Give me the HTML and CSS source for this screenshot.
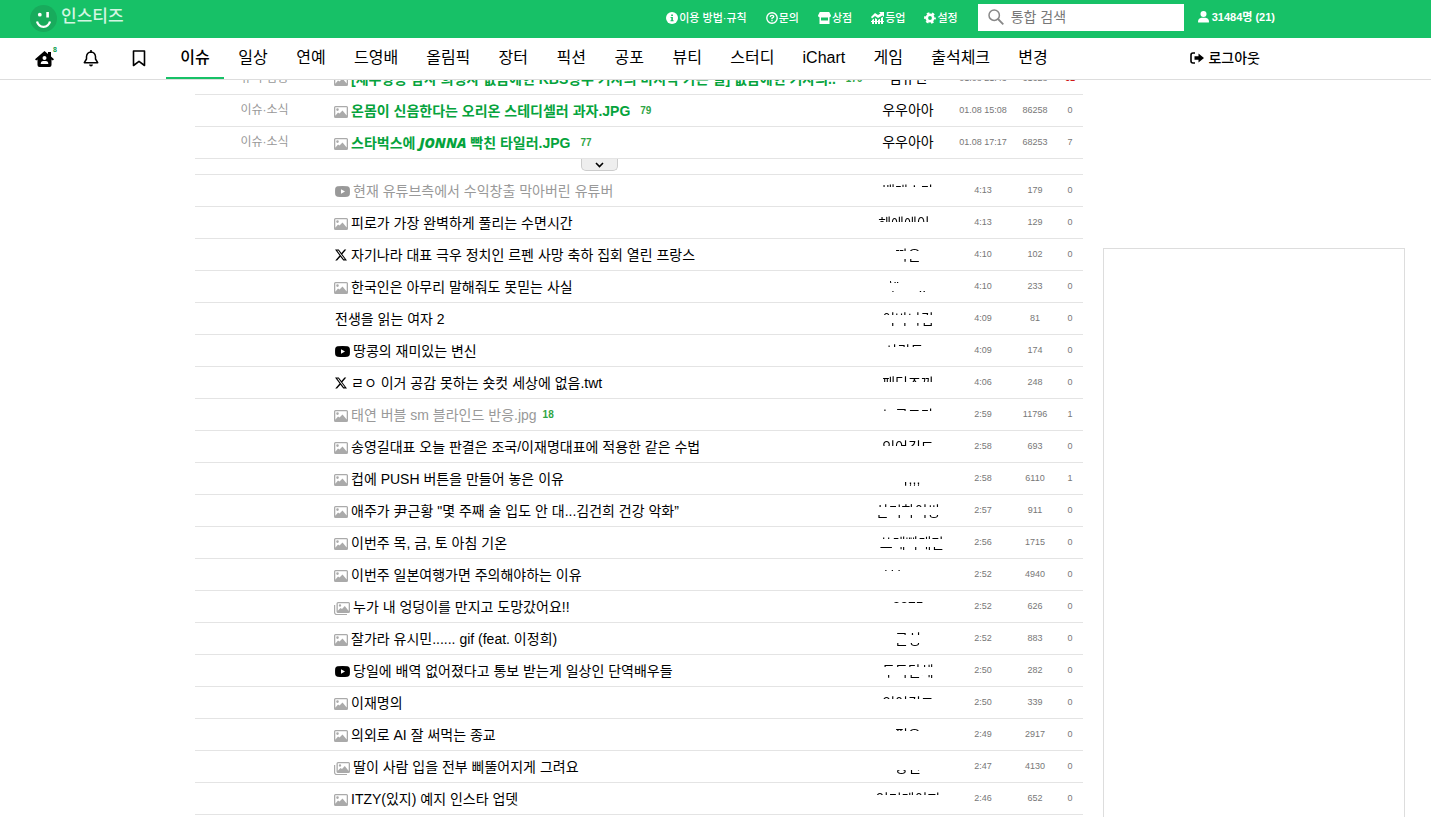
FILE: index.html
```html
<!DOCTYPE html>
<html lang="ko">
<head>
<meta charset="utf-8">
<title>인스티즈</title>
<link rel="stylesheet" href="styles.css">
</head>
<body>
<svg class="sprite" aria-hidden="true">
  <symbol id="i-image" viewBox="0 0 14 12"><path fill-rule="evenodd" d="M1.500 0h11A1.500 1.500 0 0 1 14 1.500v9a1.500 1.500 0 0 1-1.500 1.500h-11A1.500 1.500 0 0 1 0 10.500v-9A1.500 1.500 0 0 1 1.500 0zM1.300 1.300v8.500L4 6.500l1.500 1 3-3 4.200 5V1.300zM3.500 2.300a1.300 1.300 0 1 1 0 2.600 1.300 1.300 0 0 1 0-2.600z"/></symbol>
  <symbol id="i-images" viewBox="0 0 16 13"><path d="M.6 3v7.500a2 2 0 0 0 2 2H13" fill="none" stroke="currentColor" stroke-width="1.200"/><path fill-rule="evenodd" d="M4 0h10.500A1.500 1.500 0 0 1 16 1.500v8a1.500 1.500 0 0 1-1.500 1.500H4a1.500 1.500 0 0 1-1.500-1.500v-8A1.500 1.500 0 0 1 4 0zM3.800 1.300v7.500L6.500 6 8 7l2.800-3 3.900 5V1.300zM6 2.200a1.200 1.200 0 1 1 0 2.400 1.200 1.200 0 0 1 0-2.400z"/></symbol>
  <symbol id="i-video" viewBox="0 0 15 11"><path fill-rule="evenodd" d="M2.500.2Q7.500-.2 12.500.2 14.500.4 14.800 2.500q.3 3 0 6-.3 2.100-2.300 2.300-5 .4-10 0Q.5 10.600.2 8.500q-.3-3 0-6Q.5.400 2.500.2zM6 3.200v4.600l4-2.300z"/></symbol>
  <symbol id="i-x" viewBox="0 0 24 24"><path d="M18.900 1.150h3.680l-8.040 9.190L24 22.850h-7.400l-5.800-7.590-6.640 7.590H.47l8.600-9.830L0 1.150h7.600l5.240 6.940ZM17.610 20.640h2.040L6.490 3.240H4.300Z"/></symbol>
</svg>

<header class="site-header">
  <div class="topbar">
    <a class="logo" href="#">
      <svg width="27" height="27" viewBox="0 0 27 27" aria-hidden="true"><circle cx="13.500" cy="13.500" r="13.500" fill="#18ab5c"/><circle cx="9.800" cy="9.700" r="1.900" fill="#fff"/><path d="M16.300 7h2.600v5.500h-2.600z" fill="#fff"/><path d="M7 16.500q1.500 5.300 6.500 5.300t6.500-5.300" fill="none" stroke="#fff" stroke-width="2.300"/></svg>
      <span>인스티즈</span>
    </a>
    <nav class="links">
      <a href="#"><svg width="12" height="12" viewBox="0 0 12 12"><circle cx="6" cy="6" r="6" fill="#fff"/><path d="M5.200 2.500h1.700v1.500H5.200zM4.600 5h2.300v3.300h.7v1H4.500v-1h.8V6h-.7z" fill="#17c167"/></svg>이용 방법·규칙</a>
      <a href="#"><svg width="12" height="12" viewBox="0 0 12 12"><circle cx="6" cy="6" r="5.200" fill="none" stroke="#fff" stroke-width="1.400"/><path d="M4.200 4.900Q4.300 3.300 6 3.300t1.800 1.300Q7.800 5.500 6 6.100V7.200M6 8v1.300" fill="none" stroke="#fff" stroke-width="1.300"/></svg>문의</a>
      <a href="#"><svg width="13" height="12" viewBox="0 0 13 12"><path fill="#fff" fill-rule="evenodd" d="M1.800 0h9.400L13 3.500Q13 5.200 11.500 5.300V12h-10V5.300Q0 5.200 0 3.500zM3 5.500v3h7v-3z"/></svg>상점</a>
      <a href="#"><svg width="13" height="12" viewBox="0 0 13 12"><path d="M0 5 4 1l3 2 2.500-1.500L8 0h5v5l-1.500-1.500L7 6 4 4 1 6.500zM1 8l2-1.200V12H1zM4 6l2 1.200V12H4zM7 8l2-1.200V12H7zM10 6l2-1.300V12h-2zM0 9h13v1H0z" fill="#fff"/></svg>등업</a>
      <a href="#"><svg width="12" height="12" viewBox="0 0 12 12"><circle cx="6" cy="6" r="3.200" fill="none" stroke="#fff" stroke-width="2.600"/><circle cx="6" cy="6" r="4.800" fill="none" stroke="#fff" stroke-width="2.200" stroke-dasharray="2.500 2.530" stroke-dashoffset="1.200"/></svg>설정</a>
    </nav>
    <label class="search">
      <svg width="16" height="16" viewBox="0 0 16 16" aria-hidden="true"><circle cx="6.200" cy="6.200" r="5.200" fill="none" stroke="#888" stroke-width="1.500"/><path d="m10 10 5.300 5.300" stroke="#888" stroke-width="1.800"/></svg>
      <input type="text" placeholder="통합 검색" aria-label="통합 검색">
    </label>
    <a class="online" href="#"><svg width="11" height="12" viewBox="0 0 11 12"><circle cx="5.500" cy="3" r="3" fill="#fff"/><path d="M0 11Q0 7 3.500 6.700h4Q11 7 11 11q0 .6-.8.6H.8Q0 11.600 0 11z" fill="#fff"/></svg>31484명 (21)</a>
  </div>
  <nav class="menu">
    <a class="tool home" href="#" aria-label="홈"><svg width="19" height="16" viewBox="0 0 19 16"><path fill-rule="evenodd" d="M9.500 0 13 3V1h3v4.500L19 8.300 17.800 9.500 16.500 8.500V14q0 2-2 2h-10q-2 0-2-2V8.500L1.200 9.500 0 8.300zM9.500 5a2 2 0 1 0 0 4 2 2 0 0 0 0-4zM5.700 13h7.600q0-3-2.500-3H8.200q-2.500 0-2.500 3z"/></svg><span class="badge">8</span></a>
    <a class="tool bell" href="#" aria-label="알림"><svg width="16" height="17" viewBox="0 0 16 17"><path d="M8 2Q4 2.300 3.500 6.500V9L1.300 12.700h13.400L12.500 9V6.500Q12 2.300 8 2z" fill="none" stroke="#000" stroke-width="1.500" stroke-linejoin="round"/><path d="M7.200 0h1.600v2H7.200zM6 14.500h4Q9.700 16.500 8 16.500T6 14.500z"/></svg></a>
    <a class="tool mark" href="#" aria-label="북마크"><svg width="14" height="17" viewBox="0 0 14 17"><path d="M1.500 1h11v14.500L7 11.300l-5.500 4.200z" fill="none" stroke="#000" stroke-width="1.600" stroke-linejoin="round"/></svg></a>
    <a class="tab active" href="#">이슈</a><a class="tab" href="#">일상</a><a class="tab" href="#">연예</a><a class="tab" href="#">드영배</a><a class="tab" href="#">올림픽</a><a class="tab" href="#">장터</a><a class="tab" href="#">픽션</a><a class="tab" href="#">공포</a><a class="tab" href="#">뷰티</a><a class="tab" href="#">스터디</a><a class="tab" href="#">iChart</a><a class="tab" href="#">게임</a><a class="tab" href="#">출석체크</a><a class="tab" href="#">변경</a>
    <a class="logout" href="#"><svg width="14" height="12" viewBox="0 0 14 12"><path d="M5 1H3Q1 1 1 3v6q0 2 2 2h2" fill="none" stroke="#000" stroke-width="1.600"/><path d="M4.500 4.300h4V1.500L14 6l-5.500 4.500V7.700h-4z"/></svg>로그아웃</a>
  </nav>
</header>

<main class="page">
  <table class="board">
    <colgroup><col class="c-cat"><col><col class="c-author"><col class="c-time"><col class="c-views"><col class="c-rec"></colgroup>
    <tbody>
      <tr class="hot"><td class="cat">유머·감동</td><td class="title"><a href="#"><svg class="ic"><use href="#i-image"/></svg>[제주항공 참사 희생자 없음에현 KBS광주 기자의 마지막 가는 길] 없음에현 기자의..</a><b class="count">179</b></td><td>김유민</td><td class="num">01.08 21:43</td><td class="num">61628</td><td class="num best">61</td></tr>
      <tr class="hot"><td class="cat">이슈·소식</td><td class="title"><a href="#"><svg class="ic"><use href="#i-image"/></svg>온몸이 신음한다는 오리온 스테디셀러 과자.JPG</a><b class="count">79</b></td><td>우우아아</td><td class="num">01.08 15:08</td><td class="num">86258</td><td class="num">0</td></tr>
      <tr class="hot"><td class="cat">이슈·소식</td><td class="title"><a href="#"><svg class="ic"><use href="#i-image"/></svg>스타벅스에 <em>JONNA</em> 빡친 타일러.JPG</a><b class="count">77</b></td><td>우우아아</td><td class="num">01.08 17:17</td><td class="num">68253</td><td class="num">7</td></tr>
      <tr class="more"><td></td><td><button type="button" aria-label="더 보기"><svg width="9" height="6" viewBox="0 0 9 6"><path d="m1 1 3.500 3.500L8 1" fill="none" stroke="#000" stroke-width="1.600"/></svg></button></td><td colspan="4"></td></tr>
      <tr class="read"><td></td><td class="title"><a href="#"><svg class="ic video"><use href="#i-video"/></svg>현재 유튜브측에서 수익창출 막아버린 유튜버</a></td><td><span class="worn top">백래스타</span></td><td class="num">4:13</td><td class="num">179</td><td class="num">0</td></tr>
      <tr><td></td><td class="title"><a href="#"><svg class="ic"><use href="#i-image"/></svg>피로가 가장 완벽하게 풀리는 수면시간</a></td><td><span class="worn thick">헤에에이~</span></td><td class="num">4:13</td><td class="num">129</td><td class="num">0</td></tr>
      <tr><td></td><td class="title"><a href="#"><svg class="ic x"><use href="#i-x"/></svg>자기나라 대표 극우 정치인 르펜 사망 축하 집회 열린 프랑스</a></td><td><span class="worn both">따온</span></td><td class="num">4:10</td><td class="num">102</td><td class="num">0</td></tr>
      <tr><td></td><td class="title"><a href="#"><svg class="ic"><use href="#i-image"/></svg>한국인은 아무리 말해줘도 못믿는 사실</a></td><td><span class="worn both">\'' &nbsp; &nbsp; ..</span></td><td class="num">4:10</td><td class="num">233</td><td class="num">0</td></tr>
      <tr><td></td><td class="title"><a href="#" class="plain">전생을 읽는 여자 2</a></td><td><span class="worn both">이바나킴</span></td><td class="num">4:09</td><td class="num">81</td><td class="num">0</td></tr>
      <tr><td></td><td class="title"><a href="#"><svg class="ic video"><use href="#i-video"/></svg>땅콩의 재미있는 변신</a></td><td><span class="worn top">사람들..</span></td><td class="num">4:09</td><td class="num">174</td><td class="num">0</td></tr>
      <tr><td></td><td class="title"><a href="#"><svg class="ic x"><use href="#i-x"/></svg>ㄹㅇ 이거 공감 못하는 숏컷 세상에 없음.twt</a></td><td><span class="worn thick">패딘조끼</span></td><td class="num">4:06</td><td class="num">248</td><td class="num">0</td></tr>
      <tr class="read"><td></td><td class="title"><a href="#"><svg class="ic"><use href="#i-image"/></svg>태연 버블 sm 블라인드 반응.jpg</a><b class="count near">18</b></td><td><span class="worn top">느긋그가</span></td><td class="num">2:59</td><td class="num">11796</td><td class="num">1</td></tr>
      <tr><td></td><td class="title"><a href="#"><svg class="ic"><use href="#i-image"/></svg>송영길대표 오늘 판결은 조국/이재명대표에 적용한 같은 수법</a></td><td><span class="worn thick">인어길드</span></td><td class="num">2:58</td><td class="num">693</td><td class="num">0</td></tr>
      <tr><td></td><td class="title"><a href="#"><svg class="ic"><use href="#i-image"/></svg>컵에 PUSH 버튼을 만들어 놓은 이유</a></td><td><span class="worn low">나,,,</span></td><td class="num">2:58</td><td class="num">6110</td><td class="num">1</td></tr>
      <tr><td></td><td class="title"><a href="#"><svg class="ic"><use href="#i-image"/></svg>애주가 尹근황 "몇 주째 술 입도 안 대...김건희 건강 악화”</a></td><td><span class="worn both">산리하이쌍</span></td><td class="num">2:57</td><td class="num">911</td><td class="num">0</td></tr>
      <tr><td></td><td class="title"><a href="#"><svg class="ic"><use href="#i-image"/></svg>이번주 목, 금, 토 아침 기온</a></td><td><span class="worn both shift">쓰레빠대만</span></td><td class="num">2:56</td><td class="num">1715</td><td class="num">0</td></tr>
      <tr><td></td><td class="title"><a href="#"><svg class="ic"><use href="#i-image"/></svg>이번주 일본여행가면 주의해야하는 이유</a></td><td><span class="worn top">' ' ' &nbsp; &nbsp; &nbsp; &nbsp;</span></td><td class="num">2:52</td><td class="num">4940</td><td class="num">0</td></tr>
      <tr><td></td><td class="title"><a href="#"><svg class="ic multi"><use href="#i-images"/></svg>누가 내 엉덩이를 만지고 도망갔어요!!</a></td><td><span class="worn top">2275</span></td><td class="num">2:52</td><td class="num">626</td><td class="num">0</td></tr>
      <tr><td></td><td class="title"><a href="#"><svg class="ic"><use href="#i-image"/></svg>잘가라 유시민...... gif (feat. 이정희)</a></td><td><span class="worn both">근성</span></td><td class="num">2:52</td><td class="num">883</td><td class="num">0</td></tr>
      <tr><td></td><td class="title"><a href="#"><svg class="ic video"><use href="#i-video"/></svg>당일에 배역 없어졌다고 통보 받는게 일상인 단역배우들</a></td><td><span class="worn both">두둑단체</span></td><td class="num">2:50</td><td class="num">282</td><td class="num">0</td></tr>
      <tr><td></td><td class="title"><a href="#"><svg class="ic"><use href="#i-image"/></svg>이재명의</a></td><td><span class="worn top">인어길드</span></td><td class="num">2:50</td><td class="num">339</td><td class="num">0</td></tr>
      <tr><td></td><td class="title"><a href="#"><svg class="ic"><use href="#i-image"/></svg>의외로 AI 잘 써먹는 종교</a></td><td><span class="worn top">편온</span></td><td class="num">2:49</td><td class="num">2917</td><td class="num">0</td></tr>
      <tr><td></td><td class="title"><a href="#"><svg class="ic multi"><use href="#i-images"/></svg>딸이 사람 입을 전부 삐뚤어지게 그려요</a></td><td><span class="worn low">용인</span></td><td class="num">2:47</td><td class="num">4130</td><td class="num">0</td></tr>
      <tr><td></td><td class="title"><a href="#"><svg class="ic"><use href="#i-image"/></svg>ITZY(있지) 예지 인스타 업뎃</a></td><td><span class="worn top">엄터게이지</span></td><td class="num">2:46</td><td class="num">652</td><td class="num">0</td></tr>
    </tbody>
  </table>
  <aside class="side"></aside>
</main>
</body>
</html>
```

FILE: styles.css
```css
* { box-sizing: border-box; }
body {
  margin: 0;
  background: #fff;
  color: #000;
  font: 14px/20px "Liberation Sans", "Noto Sans CJK KR", sans-serif;
}
a { color: inherit; text-decoration: none; }
.sprite { display: none; }

.site-header { position: fixed; top: 0; left: 0; right: 0; z-index: 2; background: #fff; }
.topbar {
  display: flex;
  align-items: center;
  height: 38px;
  padding: 0 156px 4px 30px;
  background: #17c167;
  color: #fff;
  font-size: 11px;
}
.logo { display: flex; align-items: center; gap: 4px; font-size: 17px; font-weight: 500; color: #d3f6e2; margin-right: auto; }
.logo svg { margin-top: 2px; }
.links { display: flex; gap: 19px; margin-right: 20px; padding-top: 2px; font-weight: 500; }
.links a, .online { display: flex; align-items: center; gap: 1px; white-space: nowrap; }
.online { gap: 3px; font-weight: bold; }
.search { display: flex; align-items: center; gap: 7px; width: 206px; height: 27px; padding: 0 10px; margin-right: 14px; background: #fff; }
.search svg { flex: none; }
.search input { width: 100%; min-width: 0; border: 0; outline: 0; padding: 0; background: none; font: inherit; font-size: 14px; }
.search input::placeholder { color: #777; opacity: 1; }

.menu { display: flex; align-items: center; height: 42px; padding-left: 35px; padding-right: 171px; border-bottom: 1px solid #ddd; font-size: 16px; }
.tool { display: flex; position: relative; }
.home { margin-right: 29px; }
.bell { margin-right: 33px; }
.mark { margin-right: 20px; }
.badge { position: absolute; left: 18px; top: -5px; color: #0a9c4c; font: bold 7px/8px "Liberation Sans", sans-serif; }
.tab { min-width: 58px; padding: 0 14px; text-align: center; line-height: 39px; border-bottom: 2px solid transparent; white-space: nowrap; }
.tab.active { border-color: #17c167; font-weight: 500; }
.logout { display: flex; align-items: center; gap: 4px; margin-left: auto; padding-bottom: 2px; font-size: 14px; font-weight: 500; white-space: nowrap; }

.page { display: flex; gap: 20px; height: 100vh; overflow: hidden; padding: 63px 26px 0 195px; }
.board { flex: 1; align-self: flex-start; table-layout: fixed; border-collapse: separate; border-spacing: 0; min-width: 0; }
.c-cat { width: 139px; }
.c-author { width: 86px; }
.c-time { width: 64px; }
.c-views { width: 40px; }
.c-rec { width: 28px; }
.board td { height: 32px; padding: 0 0 1px; border-bottom: 1px solid #e4e4e4; text-align: center; white-space: nowrap; }
.board .cat { font-size: 12px; color: #999; }
.board .title { padding: 0; text-align: left; }
.title a { display: inline-flex; align-items: center; height: 20px; white-space: pre; vertical-align: middle; }
.title .plain { padding-left: 1px; }
.board .num { font-size: 9px; color: #777; }
.board .num:last-child { padding-left: 2px; }
.board .best { color: #d01818; font-weight: bold; }
.hot .title { color: #05a33c; font-weight: bold; }
.hot em { font-family: "Noto Sans", sans-serif; font-weight: 900; font-style: italic; }
.read .title { color: #999; }
.count { margin-left: 10px; font-size: 10px; color: #2fa544; vertical-align: middle; }
.near { margin-left: 6px; }
.ic { width: 14px; height: 12px; margin: 2px 3px 0 0; fill: #aaa; color: #aaa; }
.ic.video { width: 15px; height: 11px; margin: 0 3px 0 1px; fill: #000; }
.ic.x { width: 12px; height: 12px; margin: 0 4px 0 1px; fill: #000; }
.ic.multi { width: 16px; height: 13px; }
.read .ic.video { fill: #999; }
.board .more td { height: 16px; padding: 0; vertical-align: top; line-height: 0; }
.more button { display: block; width: 37px; height: 12px; margin: 0 auto; padding: 0; border: 1px solid #ccc; border-top: 0; border-radius: 0 0 5px 5px; background: #eee; line-height: 0; }

.worn { display: inline-block; height: 20px; vertical-align: middle; }
.top { mask-image: linear-gradient(#000 6px, transparent 6px); }
.thick { mask-image: linear-gradient(#000 9px, transparent 9px); }
.both { mask-image: linear-gradient(#000 6px, transparent 6px 14px, #000 14px); }
.low { mask-image: linear-gradient(transparent 13px, #000 13px); }
.shift { padding-left: 8px; }

.side { flex: none; width: 302px; margin-top: 185px; border: 1px solid #ddd; border-bottom: 0; }
```
